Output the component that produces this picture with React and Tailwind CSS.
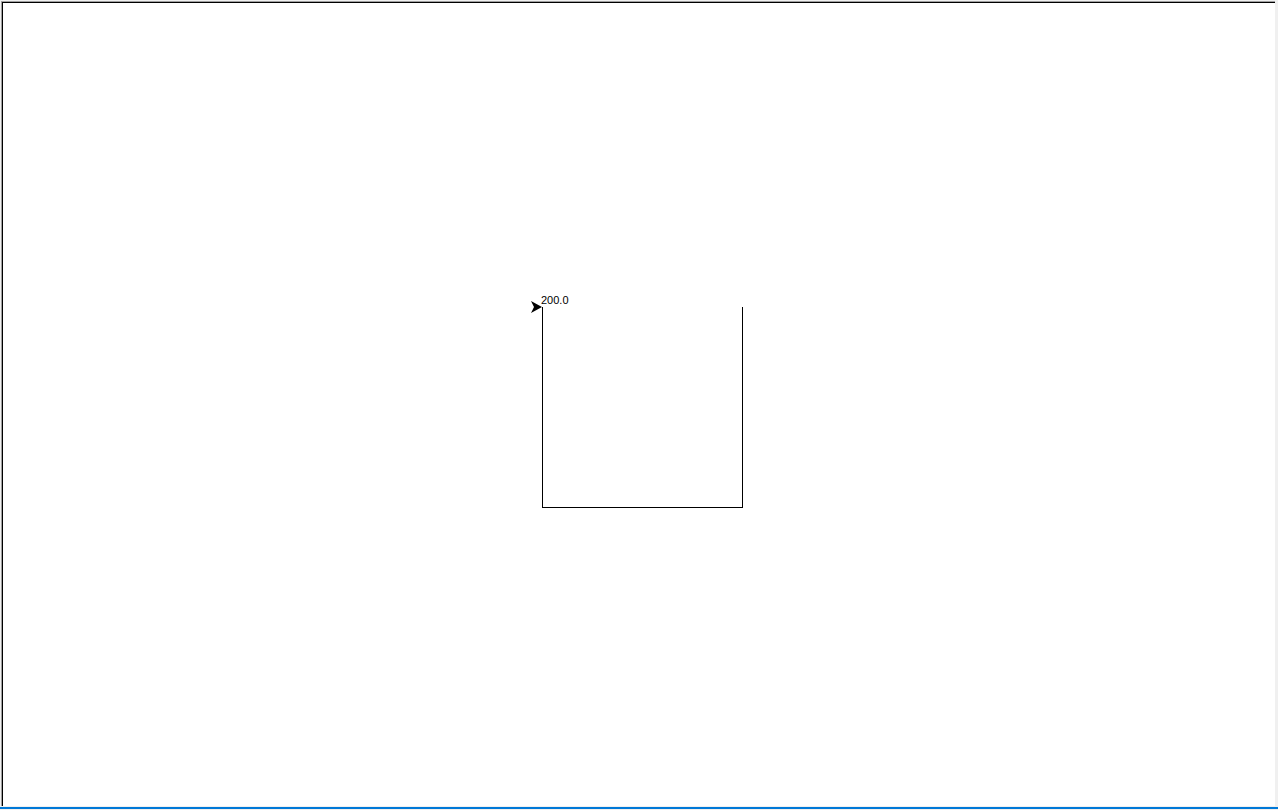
import React from "react";

// turtle canvas: coordinates are relative to the white drawing area (page - 3px)
const Turtle = () => (
  <svg width="1272" height="803" className="block">
    <g stroke="#000" strokeWidth="1" fill="none" shapeRendering="crispEdges">
      <line x1="539.5" y1="304" x2="539.5" y2="505" />
      <line x1="539.5" y1="504.5" x2="739.5" y2="504.5" />
      <line x1="739.5" y1="505" x2="739.5" y2="304" />
    </g>
    {/* turtle arrow */}
    <polygon points="539,304 528,298 531,304 528,310" fill="#000" />
    <text
      x="538"
      y="301"
      fontSize="11"
      fontFamily="'Liberation Sans', Arial, sans-serif"
      fill="#000"
    >
      200.0
    </text>
  </svg>
);

export default function App() {
  return (
    <div className="w-[1278px] h-[810px] bg-[#f0f0f0] flex flex-col overflow-hidden">
      <div className="flex-1 pt-px pl-px pr-[3px] flex flex-col">
        <div className="flex-1 border-t border-l border-[#a0a0a0] flex flex-col">
          <div className="flex-1 border-t border-l border-black bg-white overflow-hidden">
            <Turtle />
          </div>
        </div>
      </div>
      <div className="h-[1px]" />
      <div className="h-[2px] bg-[#0078d7]" />
      <div className="h-[1px]" />
    </div>
  );
}
